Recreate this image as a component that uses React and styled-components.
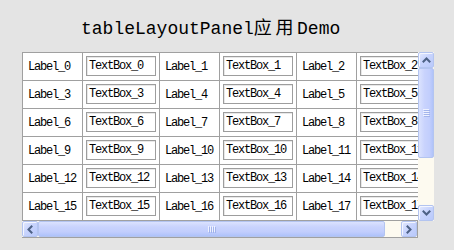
import React from "react";
import styled, { createGlobalStyle } from "styled-components";

const GlobalStyle = createGlobalStyle`
  html, body {
    margin: 0;
    padding: 0;
    background: #e4e4e4;
  }
  body {
    width: 454px;
    height: 250px;
    overflow: hidden;
    font-family: "Liberation Mono", "DejaVu Sans Mono", monospace;
  }
`;

const Page = styled.div`
  width: 454px;
  height: 250px;
  background: #e4e4e4;
`;

const Title = styled.h1`
  margin: 0;
  box-sizing: border-box;
  height: 52px;
  padding: 19px 0 0 81px;
  font-family: "Liberation Mono", "Noto Sans CJK SC", monospace;
  font-size: 18px;
  font-weight: normal;
  line-height: 20px;
  color: #000;
  white-space: nowrap;
`;

const Cjk = styled.span`
  letter-spacing: 3.6px;
`;

const Panel = styled.div`
  margin-left: 22px;
  width: 412px;
  display: grid;
  grid-template-columns: 396px 16px;
  grid-template-rows: 169px 17px;
`;

const Viewport = styled.div`
  overflow: hidden;
  background: #fff;
`;

const Table = styled.div`
  display: grid;
  grid-template-columns: 59px 76px 59px 76px 59px 76px;
  grid-auto-rows: 27px;
  gap: 1px;
  padding: 1px;
  width: max-content;
  background: #a0a0a0;
`;

const LabelCell = styled.div`
  background: #fff;
  display: flex;
  align-items: center;
  padding-left: 5px;
  font-size: 12px;
  letter-spacing: -1.2px;
  color: #000;
  white-space: nowrap;
`;

const BoxCell = styled.div`
  background: #fff;
  box-sizing: border-box;
  padding: 3px 3px 4px 3px;
`;

const TextBox = styled.div`
  box-sizing: border-box;
  width: 70px;
  height: 20px;
  border: 1px solid #9d9d9d;
  box-shadow: inset 1px 1px 0 #e8e8e8;
  padding: 2px 0 0 2px;
  font-size: 12px;
  letter-spacing: -1.2px;
  line-height: 14px;
  color: #000;
  white-space: nowrap;
  overflow: hidden;
`;

const VScroll = styled.div`
  display: flex;
  flex-direction: column;
  background: #fdfaf0;
`;

const HScroll = styled.div`
  display: flex;
  background: #fdfaf0;
  border-right: 1px solid #a0a0a0;
  border-bottom: 1px solid #a0a0a0;
`;

const ArrowButton = styled.div`
  flex: none;
  box-sizing: border-box;
  width: 16px;
  height: 16px;
  border: 1px solid #b3c4f0;
  border-radius: 2px;
  background: linear-gradient(135deg, #e3e9fe 0%, #c8d4fd 45%, #b9c9fb 100%);
  box-shadow: inset 1px 1px 0 #f4f6ff;
  display: flex;
  align-items: center;
  justify-content: center;
`;

const Thumb = styled.div`
  flex: none;
  box-sizing: border-box;
  border: 1px solid #b3c4f0;
  border-radius: 2px;
  display: flex;
  align-items: center;
  justify-content: center;
  background: ${(p) =>
    p.$vertical
      ? "linear-gradient(to right, #dbe2fe 0%, #c9d3fd 40%, #c2cefd 75%, #b0c3fa 100%)"
      : "linear-gradient(to bottom, #dbe2fe 0%, #c9d3fd 35%, #c2cefd 70%, #aec2fa 100%)"};
  width: ${(p) => (p.$vertical ? "16px" : `${p.$size}px`)};
  height: ${(p) => (p.$vertical ? `${p.$size}px` : "16px")};
`;

const Track = styled.div`
  flex: 1;
  background: #fdfaf0;
`;

const chevrons = {
  up: "1.5,5.5 4.5,2.5 7.5,5.5",
  down: "1.5,2.5 4.5,5.5 7.5,2.5",
  left: "5.5,1.5 2.5,4.5 5.5,7.5",
  right: "2.5,1.5 5.5,4.5 2.5,7.5",
};

const Arrow = ({ dir }) => (
  <ArrowButton>
    <svg width="9" height="9" viewBox="0 0 9 9">
      <polyline
        points={chevrons[dir]}
        fill="none"
        stroke="#4d6185"
        strokeWidth="2"
        strokeLinecap="square"
      />
    </svg>
  </ArrowButton>
);

const Gripper = ({ vertical }) =>
  vertical ? (
    <svg width="7" height="8" viewBox="0 0 7 8">
      {[0, 2, 4, 6].map((y) => (
        <g key={y}>
          <rect x="0" y={y} width="6" height="1" fill="#eef1ff" />
          <rect x="1" y={y + 1} width="6" height="1" fill="#8ca2e0" opacity="0.6" />
        </g>
      ))}
    </svg>
  ) : (
    <svg width="8" height="7" viewBox="0 0 8 7">
      {[0, 2, 4, 6].map((x) => (
        <g key={x}>
          <rect x={x} y="0" width="1" height="6" fill="#eef1ff" />
          <rect x={x + 1} y="1" width="1" height="6" fill="#8ca2e0" opacity="0.6" />
        </g>
      ))}
    </svg>
  );

const rows = Array.from({ length: 8 }, (_, r) => r);

export default function App() {
  return (
    <Page>
      <GlobalStyle />
      <Title>
        tableLayoutPanel<Cjk>应用</Cjk>Demo
      </Title>
      <Panel>
        <Viewport>
          <Table>
            {rows.map((r) =>
              [0, 1, 2].map((c) => {
                const n = r * 3 + c;
                return (
                  <React.Fragment key={n}>
                    <LabelCell>Label_{n}</LabelCell>
                    <BoxCell>
                      <TextBox>TextBox_{n}</TextBox>
                    </BoxCell>
                  </React.Fragment>
                );
              })
            )}
          </Table>
        </Viewport>
        <VScroll>
          <Arrow dir="up" />
          <Thumb $vertical $size={90}>
            <Gripper vertical />
          </Thumb>
          <Track />
          <Arrow dir="down" />
        </VScroll>
        <HScroll>
          <Arrow dir="left" />
          <Thumb $size={347}>
            <Gripper />
          </Thumb>
          <Track />
          <Arrow dir="right" />
        </HScroll>
      </Panel>
    </Page>
  );
}
